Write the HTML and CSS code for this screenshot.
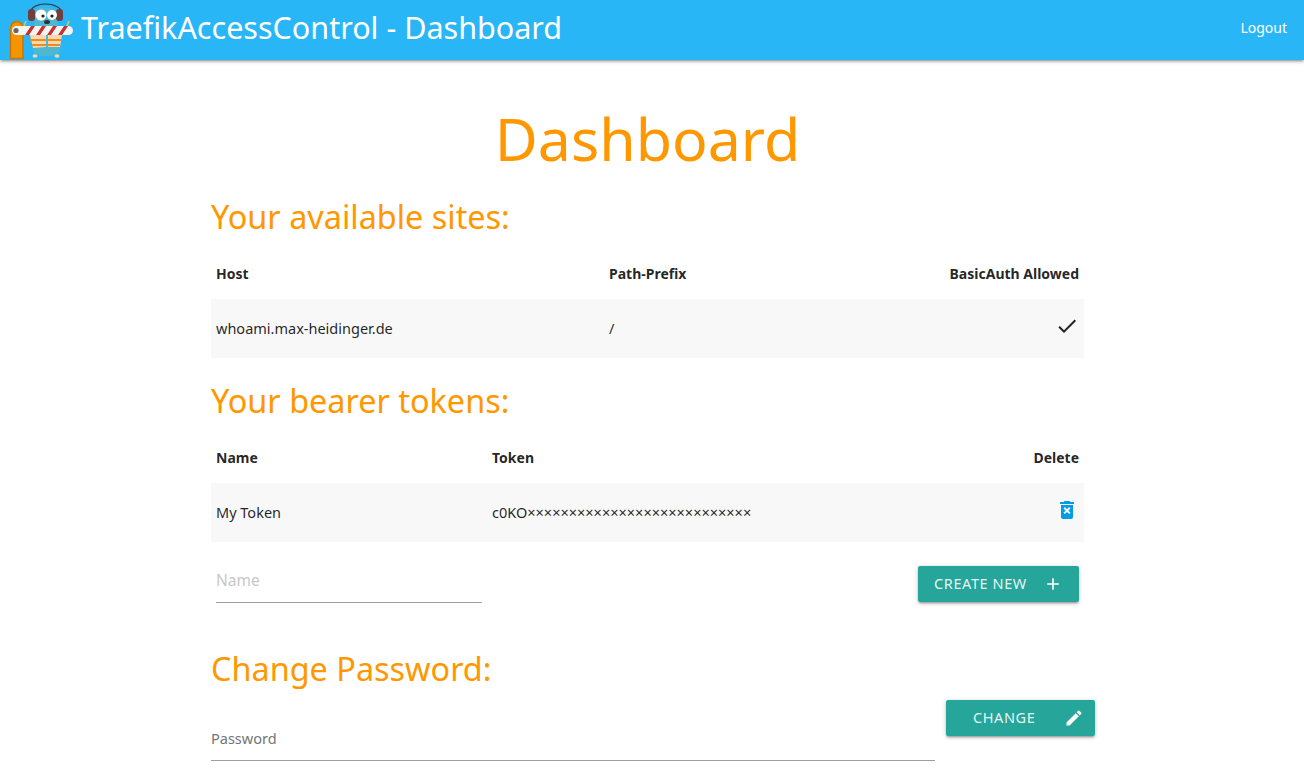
FILE: index.html
```html
<!DOCTYPE html>
<html lang="en">
<head>
  <meta charset="UTF-8">
  <title>TraefikAccessControl - Dashboard</title>
  <link rel="stylesheet" href="styles.css">
</head>
<body>

  <nav class="navbar">
    <div class="brand">
      <svg class="logo" viewBox="0 0 75 60" width="75" height="60">
        <!-- barrier post -->
        <path d="M10.500 58.500 V29 C10.500 19 23 19 23 29 V58.500 Z" fill="#f59300" stroke="#c97500" stroke-width="1.5"/>
        <!-- gopher -->
        <path d="M34 18 C28 4 60 4 58 18 L57 32 L60 50 C58 58 35 58 33 50 L35 32 Z" fill="#4fb8cf"/>
        <path d="M30 13 C31 1 60 1 62 13" fill="none" stroke="#333" stroke-width="1.2"/>
        <rect x="28" y="9" width="7" height="12" rx="3" fill="#6e3f3f"/>
        <rect x="56" y="9" width="7" height="12" rx="3" fill="#6e3f3f"/>
        <circle cx="41" cy="15" r="5.5" fill="#fff"/>
        <circle cx="52" cy="15" r="5" fill="#fff"/>
        <circle cx="43" cy="16" r="1.6" fill="#222"/>
        <circle cx="52" cy="16" r="1.6" fill="#222"/>
        <ellipse cx="47" cy="22" rx="3" ry="2" fill="#333"/>
        <!-- hands -->
        <path d="M24 26 L26 21 M67 26 L69 21" stroke="#c9d24a" stroke-width="1.5"/>
        <!-- vest -->
        <path d="M30 35 L46 35 L46 47 L33 48 Z" fill="#f7d9b0"/>
        <path d="M48 35 L62 35 L60 47 L48 47 Z" fill="#f7d9b0"/>
        <path d="M30 40 L46 40 M48 40 L62 40 M32 45 L46 45 M48 45 L60 45" stroke="#f28a1c" stroke-width="2.2"/>
        <!-- feet -->
        <ellipse cx="35" cy="56" rx="2.5" ry="1.8" fill="#f0d7b0"/>
        <ellipse cx="57" cy="56" rx="2.5" ry="1.8" fill="#f0d7b0"/>
        <!-- barrier arm -->
        <rect x="12" y="26" width="61" height="9" rx="4.500" fill="#f4f4f4"/>
        <path d="M25 35 L31 26 L35 26 L29 35 Z M36 35 L42 26 L46 26 L40 35 Z M47 35 L53 26 L57 26 L51 35 Z M58 35 L64 26 L68 26 L62 35 Z" fill="#c8322e"/>
        <circle cx="16" cy="30.500" r="2.600" fill="#666"/>
      </svg>
      <span class="brand-title">TraefikAccessControl - Dashboard</span>
    </div>
    <a class="logout" href="#">Logout</a>
  </nav>

  <main class="content">
    <h1>Dashboard</h1>

    <h2>Your available sites:</h2>
    <table class="sites">
      <thead>
        <tr><th>Host</th><th>Path-Prefix</th><th class="right">BasicAuth Allowed</th></tr>
      </thead>
      <tbody>
        <tr>
          <td>whoami.max-heidinger.de</td>
          <td>/</td>
          <td class="right">
            <svg class="icon check" viewBox="0 0 24 24" width="24" height="24"><path d="M9 16.200 4.800 12l-1.400 1.400L9 19 21 7l-1.400-1.400z"/></svg>
          </td>
        </tr>
      </tbody>
    </table>

    <h2>Your bearer tokens:</h2>
    <table class="tokens">
      <thead>
        <tr><th>Name</th><th>Token</th><th class="right">Delete</th></tr>
      </thead>
      <tbody>
        <tr>
          <td>My Token</td>
          <td>c0KO×××××××××××××××××××××××××××</td>
          <td class="right">
            <svg class="icon trash" viewBox="0 0 24 24" width="24" height="24"><path d="M6 19c0 1.100.9 2 2 2h8c1.100 0 2-.9 2-2V7H6v12zm2.500-8.500 1.400-1.400L12 11.200l2.100-2.100 1.400 1.400L13.400 12.600l2.100 2.100-1.400 1.400L12 14l-2.100 2.100-1.400-1.400 2.100-2.100-2.100-2.100zM15.500 4l-1-1h-5l-1 1H5v2h14V4z"/></svg>
          </td>
        </tr>
      </tbody>
    </table>

    <div class="new-token">
      <input class="field name-field" type="text" placeholder="Name">
      <button class="btn">Create new
        <svg class="btn-icon" viewBox="0 0 24 24" width="20" height="20"><path d="M19 13h-6v6h-2v-6H5v-2h6V5h2v6h6z"/></svg>
      </button>
    </div>

    <h2 class="password-title">Change Password:</h2>
    <div class="change-password">
      <input class="field password-field" type="password" placeholder="Password">
      <button class="btn btn-wide">Change
        <svg class="btn-icon" viewBox="0 0 24 24" width="20" height="20"><path d="M3 17.250V21h3.750L17.810 9.940l-3.750-3.750L3 17.250zM20.710 7.040a1 1 0 0 0 0-1.410l-2.340-2.340a1 1 0 0 0-1.410 0l-1.830 1.830 3.750 3.750 1.830-1.830z"/></svg>
      </button>
    </div>
  </main>

</body>
</html>
```

FILE: styles.css
```css
* {
  box-sizing: border-box;
  margin: 0;
  padding: 0;
}

html, body {
  height: 100%;
  overflow: hidden;
}

body {
  font-family: 'Noto Sans', 'Open Sans', sans-serif;
  background-color: #fff;
  color: rgba(0, 0, 0, 0.87);
  font-size: 14px;
}

.navbar {
  height: 60px;
  background-color: #29b6f6;
  box-shadow: 0 2px 2px 0 rgba(0, 0, 0, 0.14), 0 3px 1px -2px rgba(0, 0, 0, 0.12), 0 1px 5px 0 rgba(0, 0, 0, 0.2);
  display: flex;
  justify-content: space-between;
  align-items: center;
  padding-right: 17px;
  color: #fff;
}

.brand {
  display: flex;
  align-items: center;
}

.logo {
  margin-right: 6px;
}

.brand-title {
  font-size: 30.5px;
  font-weight: 400;
  padding-bottom: 6px;
}

.logout {
  color: #fff;
  text-decoration: none;
  font-size: 14px;
  padding-bottom: 5px;
}

.content {
  width: 873px;
  margin-left: 211px;
}

h1 {
  font-size: 59px;
  font-weight: 400;
  color: #ff9800;
  text-align: center;
  line-height: 76px;
  margin-top: 40px;
  margin-bottom: -2px;
}

h2 {
  font-size: 32.4px;
  font-weight: 400;
  color: #ff9800;
  line-height: 40px;
  margin-top: 22px;
  margin-bottom: 8px;
}

table {
  width: 100%;
  border-collapse: collapse;
  table-layout: fixed;
}

th, td {
  padding: 0 5px;
  text-align: left;
  font-size: 14.5px;
}

th {
  height: 55px;
  padding-top: 3px;
  font-size: 14px;
  font-weight: 700;
}

td {
  height: 59px;
  padding-bottom: 2px;
}

tbody tr {
  background-color: #f8f8f8;
}

.right {
  text-align: right;
}

.sites th:first-child { width: 393px; }
.sites th:nth-child(2) { width: 240px; }
.tokens th:first-child { width: 276px; }
.tokens th:nth-child(2) { width: 400px; }

.icon {
  display: inline-block;
  vertical-align: middle;
}

.check {
  fill: #222;
  margin-bottom: 4px;
}

.trash {
  fill: #039be5;
  margin-bottom: 4px;
}

.field {
  border: none;
  border-bottom: 1px solid #9e9e9e;
  outline: none;
  background: transparent;
  font-family: inherit;
  font-size: 14.5px;
  height: 46px;
}

.field::placeholder {
  color: #c8c8c8;
}

.new-token {
  display: flex;
  justify-content: space-between;
  align-items: flex-end;
  padding: 14px 5px 0;
}

.new-token .btn {
  margin-bottom: 1px;
}

.name-field {
  width: 266px;
  height: 47px;
  font-size: 15.5px;
  padding-top: 2px;
}

.btn {
  display: flex;
  align-items: center;
  justify-content: space-between;
  height: 36px;
  padding: 0 16px 2px;
  width: 161px;
  border: none;
  border-radius: 2px;
  background-color: #26a69a;
  color: rgba(255, 255, 255, 0.9);
  font-family: inherit;
  font-size: 14.5px;
  letter-spacing: 0.6px;
  text-transform: uppercase;
  box-shadow: 0 2px 2px 0 rgba(0, 0, 0, 0.14), 0 3px 1px -2px rgba(0, 0, 0, 0.12), 0 1px 5px 0 rgba(0, 0, 0, 0.2);
}

.btn-wide {
  width: 149px;
  padding: 0 11px 2px 27px;
}

.btn-icon {
  fill: #fff;
  position: relative;
  top: 1px;
}

.password-title {
  margin-top: 45px;
  margin-bottom: 0;
}

.change-password {
  display: flex;
  justify-content: space-between;
  margin-right: -11px;
  margin-top: 12px;
}

.password-field {
  width: 724px;
  margin-top: 15px;
}

.password-field::placeholder {
  color: #757575;
}
```
